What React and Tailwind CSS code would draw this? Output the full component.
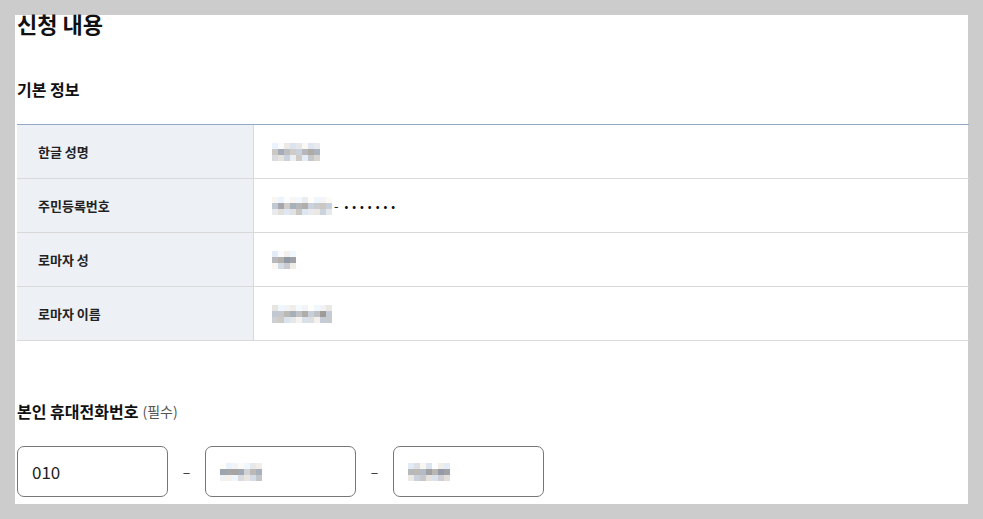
import React from "react";

const FONT = { fontFamily: '"Noto Sans CJK KR", "Noto Sans", sans-serif' };

function Mosaic({ cols, rows, seed, cw = 6, ch = 6 }) {
  const cells = [];
  let s = seed;
  for (let r = 0; r < rows; r++) {
    for (let c = 0; c < cols; c++) {
      s = (s * 9301 + 49297) % 233280;
      const rnd = s / 233280;
      let base;
      if (r === 0) base = 222 + rnd * 30;
      else if (r === rows - 1) base = 195 + rnd * 50;
      else base = 150 + rnd * 60;
      const tint = (s % 3) - 1;
      const rr = Math.min(255, Math.round(base + tint * 6));
      const gg = Math.min(255, Math.round(base + 2));
      const bb = Math.min(255, Math.round(base - tint * 8 + 5));
      cells.push(
        <div
          key={r + "-" + c}
          style={{ width: cw, height: ch, background: `rgb(${rr},${gg},${bb})` }}
        />
      );
    }
  }
  return (
    <div
      className="grid"
      style={{ gridTemplateColumns: `repeat(${cols}, ${cw}px)` }}
    >
      {cells}
    </div>
  );
}

function Row({ label, children }) {
  return (
    <div className="flex h-[54px] border-b border-[#d9d9d9]">
      <div className="flex w-[237px] shrink-0 items-center border-r border-[#d9d9d9] bg-[#edf0f4] pl-[21px] text-[13px] font-bold text-[#222]">
        {label}
      </div>
      <div className="flex flex-1 items-center pl-[18px]">{children}</div>
    </div>
  );
}

function InputBox({ children }) {
  return (
    <div className="flex h-[51px] w-[151px] items-center rounded-[7px] border border-[#777] pl-[14px] text-[17px] text-[#222]">
      {children}
    </div>
  );
}

export default function App() {
  return (
    <div className="h-[519px] w-[983px] bg-[#cccccc] p-[15px]" style={FONT}>
      <div className="flex h-full w-full flex-col bg-white pl-[2px]">
        <h2 className="mt-[-7px] text-[22px] font-bold leading-[30px] text-[#111]">
          신청 내용
        </h2>
        <h3 className="mt-[39px] text-[16px] font-bold leading-[24px] text-[#111]">
          기본 정보
        </h3>
        <div className="mt-[23px] mr-[-1px] border-t border-[#93a9c6]">
          <Row label="한글 성명">
            <Mosaic cols={8} rows={3} seed={11} />
          </Row>
          <Row label="주민등록번호">
            <div className="flex items-center">
              <Mosaic cols={10} rows={3} seed={37} />
              <span className="ml-[2px] text-[13px] text-[#222]">-</span>
              <span className="ml-[6px] text-[10px] font-bold tracking-[4px] text-[#111]">
                •••••••
              </span>
            </div>
          </Row>
          <Row label="로마자 성">
            <Mosaic cols={4} rows={3} seed={5} />
          </Row>
          <Row label="로마자 이름">
            <Mosaic cols={10} rows={3} seed={73} />
          </Row>
        </div>
        <div className="mt-[59px] flex h-[22px] items-end">
          <span className="text-[16px] font-bold leading-[22px] text-[#111]">
            본인 휴대전화번호
          </span>
          <span className="ml-[4px] text-[14px] leading-[21px] text-[#555]">(필수)</span>
        </div>
        <div className="mt-[24px] flex items-center gap-[14px]">
          <InputBox>010</InputBox>
          <span className="w-[9px] text-center text-[14px] text-[#333]">–</span>
          <InputBox>
            <Mosaic cols={7} rows={3} seed={19} />
          </InputBox>
          <span className="w-[9px] text-center text-[14px] text-[#333]">–</span>
          <InputBox>
            <Mosaic cols={7} rows={3} seed={53} />
          </InputBox>
        </div>
      </div>
    </div>
  );
}
